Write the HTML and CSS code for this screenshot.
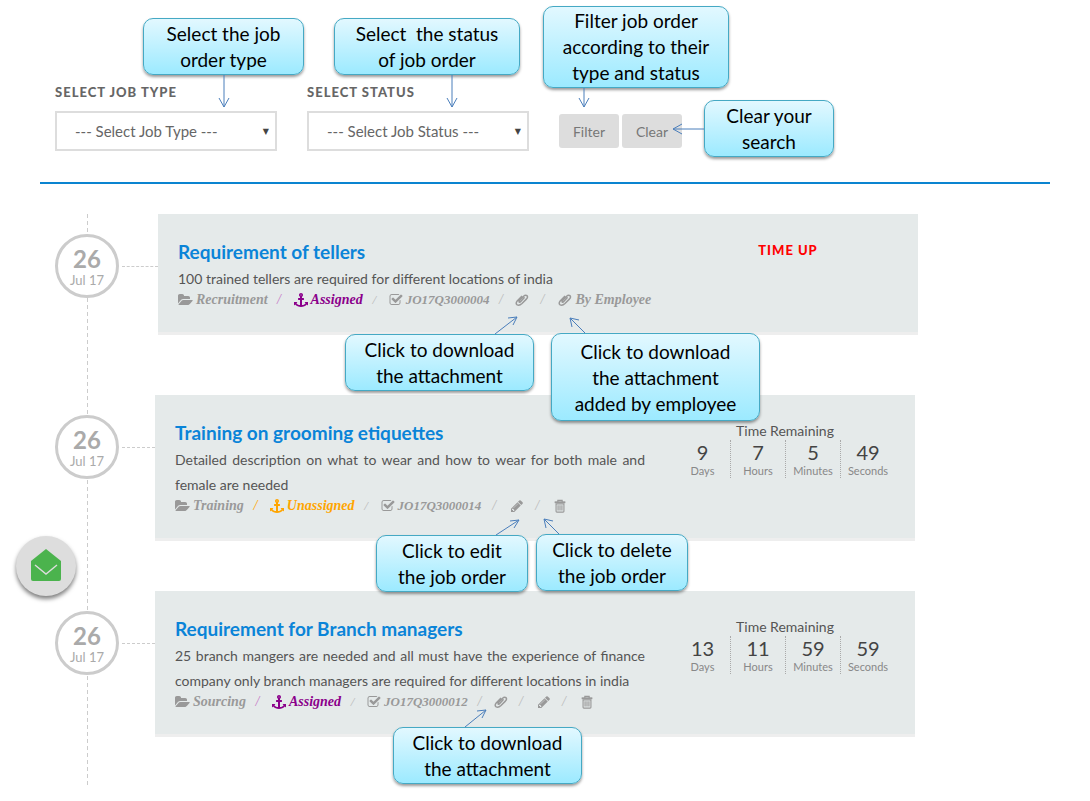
FILE: index.html
```html
<!DOCTYPE html>
<html lang="en">
<head>
<meta charset="utf-8">
<meta name="viewport" content="width=device-width, initial-scale=1">
<title>Job orders</title>
<link rel="stylesheet" href="styles.css">
</head>
<body>
<svg class="sprite" aria-hidden="true">
  <symbol id="folder" viewBox="0 0 1920 1792"><path d="M1879 952q0 31-31 66l-336 396q-43 51-120.5 86.5t-143.5 35.5h-1088q-34 0-60.5-13t-26.5-43q0-31 31-66l336-396q43-51 120.5-86.5t143.5-35.5h1088q34 0 60.5 13t26.5 43zm-343-344v160h-832q-94 0-197 47.5t-164 119.5l-337 396-5 6q0-4-.5-12.5t-.5-12.5v-960q0-92 66-158t158-66h320q92 0 158 66t66 158v32h544q92 0 158 66t66 158z"/></symbol>
  <symbol id="anchor" viewBox="0 0 1792 1792"><path d="M960 256q0-26-19-45t-45-19-45 19-19 45 19 45 45 19 45-19 19-45zm832 928v352q0 22-20 30-8 2-12 2-12 0-23-9l-93-93q-119 143-318.500 226.500t-429.500 83.500-429.500-83.500-318.500-226.500l-93 93q-9 9-23 9-4 0-12-2-20-8-20-30v-352q0-14 9-23t23-9h352q22 0 30 20 8 19-7 35l-100 100q67 91 189.500 153.500t271.500 82.500v-647h-192q-26 0-45-19t-19-45v-128q0-26 19-45t45-19h192v-163q-58-34-93-92.500t-35-128.500q0-106 75-181t181-75 181 75 75 181q0 70-35 128.500t-93 92.500v163h192q26 0 45 19t19 45v128q0 26-19 45t-45 19h-192v647q149-20 271.500-82.500t189.500-153.500l-100-100q-15-16-7-35 8-20 30-20h352q14 0 23 9t9 23z"/></symbol>
  <symbol id="check" viewBox="0 0 1792 1792"><path d="M1472 930v318q0 119-84.500 203.500t-203.500 84.500h-832q-119 0-203.500-84.500t-84.500-203.500v-832q0-119 84.500-203.500t203.500-84.500h832q63 0 117 25 15 7 18 23 3 17-9 29l-49 49q-10 10-23 10-3 0-9-2-23-6-45-6h-832q-66 0-113 47t-47 113v832q0 66 47 113t113 47h832q66 0 113-47t47-113v-254q0-13 9-22l64-64q10-10 23-10 6 0 12 3 20 8 20 29zm231-489l-814 814q-24 24-57 24t-57-24l-430-430q-24-24-24-57t24-57l110-110q24-24 57-24t57 24l263 263 647-647q24-24 57-24t57 24l110 110q24 24 24 57t-24 57z"/></symbol>
  <symbol id="pencil" viewBox="0 0 1792 1792"><path d="M491 1536l91-91-235-235-91 91v107h128v128h107zm523-928q0-22-22-22-10 0-17 7l-542 542q-7 7-7 17 0 22 22 22 10 0 17-7l542-542q7-7 7-17zm-54-192l416 416-832 832h-416v-416zm683 96q0 53-37 90l-166 166-416-416 166-165q36-38 90-38 53 0 91 38l235 234q37 39 37 91z"/></symbol>
  <symbol id="clip" viewBox="0 0 16 14"><path d="M10.500 4.500 6.600 8.600Q5 10.200 4.600 9Q4.400 8.200 5.500 7L9.500 3Q12 .8 13.600 2Q15.300 3.400 13 6L8 11Q5 13.700 2.500 12.500Q.2 10.900 2.500 8.100L7.500 2.900" fill="none" stroke="currentColor" stroke-width="1.700" stroke-linecap="round"/></symbol>
  <symbol id="trash" viewBox="0 0 14 16"><path d="M4.500 3V1.500h5V3M1 3.500h12M2.500 5.500h9V14q0 1-1 1h-7q-1 0-1-1zM4.800 7v6M7 7v6M9.200 7v6" fill="none" stroke="currentColor" stroke-width="1.300"/><path d="M1 3h12v1.800h-12z"/></symbol>
</svg>

<main class="page">
  <form class="filters">
    <div class="field">
      <label class="field-label" for="job-type">Select job type</label>
      <div class="select-box">
        <select id="job-type"><option>--- Select Job Type ---</option></select>
        <span class="caret" aria-hidden="true">▼</span>
      </div>
      <div class="callout callout-type">Select the job<br>order type
        <svg class="arrow" aria-hidden="true"><path d="M80 56v32M75 79l5 9 5-9"/></svg>
      </div>
    </div>
    <div class="field">
      <label class="field-label" for="job-status">Select status</label>
      <div class="select-box">
        <select id="job-status"><option>--- Select Job Status ---</option></select>
        <span class="caret" aria-hidden="true">▼</span>
      </div>
      <div class="callout callout-status">Select&nbsp; the status<br>of job order
        <svg class="arrow" aria-hidden="true"><path d="M117 56v32M112 79l5 9 5-9"/></svg>
      </div>
    </div>
    <div class="actions">
      <button class="btn" type="submit">Filter</button>
      <button class="btn" type="reset">Clear</button>
      <div class="callout callout-filter">Filter job order<br>according to their<br>type and status
        <svg class="arrow" aria-hidden="true"><path d="M40 81v19M35 91l5 9 5-9"/></svg>
      </div>
      <div class="callout callout-clear">Clear your<br>search
        <svg class="arrow" aria-hidden="true"><path d="M-1 28h-31M-23 23l-9 5 9 5"/></svg>
      </div>
    </div>
  </form>

  <section class="timeline">
    <article class="entry entry-closed">
      <div class="rail"><time class="date" datetime="2017-07-26"><b>26</b><span>Jul 17</span></time></div>
      <div class="card">
        <div class="info">
          <h2 class="title">Requirement of tellers</h2>
          <p class="desc">100 trained tellers are required for different locations of india</p>
          <ul class="meta">
            <li><svg class="icon wide"><use href="#folder"/></svg>Recruitment</li>
            <li class="assigned"><svg class="icon"><use href="#anchor"/></svg>Assigned</li>
            <li class="code"><svg class="icon"><use href="#check"/></svg>JO17Q3000004</li>
            <li><a href="#" aria-label="Attachment"><svg class="icon"><use href="#clip"/></svg></a></li>
            <li class="action"><a href="#"><svg class="icon"><use href="#clip"/></svg>By Employee</a></li>
          </ul>
        </div>
        <div class="remaining"><strong class="time-up">Time up</strong></div>
        <div class="callout callout-attach">Click to download<br>the attachment
          <svg class="arrow" aria-hidden="true"><path d="M149-1l22-17M162-17l9-1-4 8"/></svg>
        </div>
        <div class="callout callout-employee">Click to download<br>the attachment<br>added by employee
          <svg class="arrow" aria-hidden="true"><path d="M33-1L18-16M20-7l-2-9 9 2"/></svg>
        </div>
      </div>
    </article>

    <article class="entry">
      <div class="rail"><time class="date" datetime="2017-07-26"><b>26</b><span>Jul 17</span></time></div>
      <div class="card">
        <div class="info">
          <h2 class="title">Training on grooming etiquettes</h2>
          <p class="desc">Detailed description on what to wear and how to wear for both male and female are needed</p>
          <ul class="meta">
            <li><svg class="icon wide"><use href="#folder"/></svg>Training</li>
            <li class="unassigned"><svg class="icon"><use href="#anchor"/></svg>Unassigned</li>
            <li class="code"><svg class="icon"><use href="#check"/></svg>JO17Q3000014</li>
            <li class="action"><a href="#" aria-label="Edit"><svg class="icon"><use href="#pencil"/></svg></a></li>
            <li class="action"><a href="#" aria-label="Delete"><svg class="icon"><use href="#trash"/></svg></a></li>
          </ul>
        </div>
        <div class="remaining">
          <p class="remaining-label">Time Remaining</p>
          <ul class="clock">
            <li><b>9</b><span>Days</span></li>
            <li><b>7</b><span>Hours</span></li>
            <li><b>5</b><span>Minutes</span></li>
            <li><b>49</b><span>Seconds</span></li>
          </ul>
        </div>
        <div class="callout callout-edit">Click to edit<br>the job order
          <svg class="arrow" aria-hidden="true"><path d="M119-1l23-15M133-15l9-1-5 8"/></svg>
        </div>
        <div class="callout callout-delete">Click to delete<br>the job order
          <svg class="arrow" aria-hidden="true"><path d="M22-1L7-16M9-7l-2-9 9 2"/></svg>
        </div>
      </div>
    </article>

    <article class="entry">
      <div class="rail"><time class="date" datetime="2017-07-26"><b>26</b><span>Jul 17</span></time></div>
      <div class="card">
        <div class="info">
          <h2 class="title">Requirement for Branch managers</h2>
          <p class="desc">25 branch mangers are needed and all must have the experience of finance company only branch managers are required for different locations in india</p>
          <ul class="meta">
            <li><svg class="icon wide"><use href="#folder"/></svg>Sourcing</li>
            <li class="assigned"><svg class="icon"><use href="#anchor"/></svg>Assigned</li>
            <li class="code"><svg class="icon"><use href="#check"/></svg>JO17Q3000012</li>
            <li><a href="#" aria-label="Attachment"><svg class="icon"><use href="#clip"/></svg></a></li>
            <li class="action"><a href="#" aria-label="Edit"><svg class="icon"><use href="#pencil"/></svg></a></li>
            <li class="action"><a href="#" aria-label="Delete"><svg class="icon"><use href="#trash"/></svg></a></li>
          </ul>
        </div>
        <div class="remaining">
          <p class="remaining-label">Time Remaining</p>
          <ul class="clock">
            <li><b>13</b><span>Days</span></li>
            <li><b>11</b><span>Hours</span></li>
            <li><b>59</b><span>Minutes</span></li>
            <li><b>59</b><span>Seconds</span></li>
          </ul>
        </div>
        <div class="callout callout-attach-last">Click to download<br>the attachment
          <svg class="arrow" aria-hidden="true"><path d="M71-1l21-17M83-17l9-1-4 8"/></svg>
        </div>
      </div>
    </article>
  </section>
</main>

<button class="mail" type="button" aria-label="Messages">
  <svg viewBox="0 0 32 34" aria-hidden="true"><path d="M16 1 31 13v18q0 2-2 2H3q-2 0-2-2V13z" fill="#4bb34d"/><path d="m5 17 11 9 11-9" fill="none" stroke="#ddd" stroke-width="1.400"/></svg>
</button>
</body>
</html>
```
FILE: styles.css
```css
* { box-sizing: border-box; }

body {
  margin: 0;
  background: #fff;
  color: #555;
  font: 14px/25px Lato, "Open Sans", sans-serif;
}

h2, p, ul { margin: 0; padding: 0; }
ul { list-style: none; }
a { color: inherit; text-decoration: none; }

.sprite { position: absolute; width: 0; height: 0; }

.page { padding: 0 40px 16px; }

/* Filter bar */
.filters {
  display: flex;
  align-items: flex-end;
  gap: 30px;
  padding: 82px 15px 31px;
  border-bottom: 2px solid #0a84d0;
}

.field {
  position: relative;
  flex: 0 1 222px;
  display: flex;
  flex-direction: column;
  gap: 9px;
}

.field-label {
  color: #666;
  font-size: 13px;
  font-weight: 900;
  line-height: 20px;
  letter-spacing: 1px;
  text-transform: uppercase;
}

.select-box { display: grid; align-items: center; }
.select-box > * { grid-area: 1 / 1; }

.select-box select {
  appearance: none;
  width: 100%;
  height: 40px;
  padding: 0 18px;
  border: 2px solid #ddd;
  border-radius: 0;
  background: #fff;
  color: #666;
  font: 15px Lato, sans-serif;
}

.caret {
  justify-self: end;
  padding-right: 8px;
  color: #444;
  font: 8px "DejaVu Sans", sans-serif;
  pointer-events: none;
}

.actions {
  position: relative;
  display: flex;
  gap: 3px;
  padding-bottom: 3px;
}

.btn {
  min-width: 60px;
  height: 34px;
  padding: 0 12px;
  border: 0;
  border-radius: 3px;
  background: #ddd;
  color: #777;
  font: 14px Lato, sans-serif;
}

/* Timeline */
.timeline {
  margin-top: 30px;
  padding: 0 15px 48px;
  background: repeating-linear-gradient(to bottom, #ccc 0 4px, transparent 4px 7px) 47px 0 / 1px 100% no-repeat;
}

.entry {
  display: grid;
  grid-template-columns: 100px minmax(0, 760px);
  margin-bottom: 50px;
}
.entry:last-child { margin-bottom: 0; }
.entry-closed { grid-template-columns: 103px minmax(0, 760px); margin-bottom: 60px; }

.rail {
  display: flex;
  align-items: center;
  align-self: start;
  gap: 3px;
  padding-top: 20px;
}
.rail::after { content: ""; flex: 1; border-top: 1px dashed #ccc; }

.date {
  display: flex;
  flex-direction: column;
  justify-content: center;
  align-items: center;
  width: 64px;
  height: 64px;
  padding-top: 4px;
  border: 3px solid #ccc;
  border-radius: 50%;
  background: #fff;
  color: #aaa;
}
.date b { font-size: 24px; line-height: 24px; }
.date span { font-size: 13px; line-height: 18px; }

.card {
  position: relative;
  display: grid;
  grid-template-columns: minmax(0, 470fr) minmax(0, 220fr);
  gap: 30px;
  padding: 24px 20px 23px;
  border-bottom: 3px solid #eee;
  background: #e5eaea padding-box;
}

.title {
  color: #0a84d8;
  font-size: 19px;
  font-weight: 700;
  line-height: 28px;
}

.desc { text-align: justify; }

.meta {
  display: flex;
  white-space: nowrap;
  color: #999;
  font: italic bold 14px/18px "Liberation Serif", serif;
}
.meta li, .meta a { display: flex; align-items: center; gap: 3px; }
.meta li + li::before {
  content: "/";
  width: 23px;
  color: #bbb;
  font-weight: normal;
  text-align: center;
}
.meta li.action::before { width: 26px; }
.meta .code { font-size: 13px; }
.meta li.assigned::before { color: #c77bc7; }
.meta li.unassigned::before { color: #ffa500; }
.meta .assigned { color: #8b008b; }
.meta .unassigned { color: #ffa500; }

.icon { width: 14px; height: 14px; fill: currentColor; }
.icon.wide { width: 15px; }

.remaining { padding-top: 3px; text-align: center; }
.remaining-label { line-height: 18px; }

.time-up {
  display: block;
  color: #f00;
  font-size: 13px;
  font-weight: 900;
  line-height: 18px;
  letter-spacing: 1px;
  text-transform: uppercase;
}

.clock { display: grid; grid-template-columns: repeat(4, 1fr); }
.clock li { display: flex; flex-direction: column; }
.clock li + li { border-left: 1px dotted #aaa; }
.clock b { color: #444; font-size: 20px; font-weight: 400; line-height: 24px; }
.clock span { color: #888; font-size: 11px; line-height: 14px; }

/* Help callouts, laid over the parts they explain */
.callout {
  position: absolute;
  z-index: 2;
  padding: 2px 0 1px;
  border: 1px solid #45a9c4;
  border-radius: 10px;
  background: linear-gradient(#e2f8ff, #9ceaff);
  box-shadow: 0 2px 3px rgba(0, 0, 0, .4);
  color: #000;
  font-size: 19px;
  line-height: 26px;
  text-align: center;
  white-space: nowrap;
}
.arrow {
  position: absolute;
  left: 0;
  top: 0;
  width: 1px;
  height: 1px;
  overflow: visible;
  fill: none;
  stroke: #4a7ebb;
  stroke-width: 1;
}

.callout-type { left: 88px; top: -64px; width: 161px; }
.callout-status { left: 27px; top: -64px; width: 186px; }
.callout-filter { left: -16px; top: -108px; width: 186px; padding: 1px 0; }
.callout-clear { left: 145px; top: -14px; width: 130px; }
.callout-attach { left: 187px; top: 120px; width: 189px; }
.callout-employee { left: 393px; top: 119px; width: 209px; padding: 5px 0 3px; }
.callout-edit { left: 221px; top: 140px; width: 152px; }
.callout-delete { left: 381px; top: 139px; width: 152px; }
.callout-attach-last { left: 238px; top: 136px; width: 189px; }

/* Floating message button */
.mail {
  position: absolute;
  left: 16px;
  top: 536px;
  display: grid;
  place-items: center;
  width: 60px;
  height: 60px;
  padding: 0 0 3px;
  border: 0;
  border-radius: 50%;
  background: #ddd;
  box-shadow: 0 3px 4px rgba(0, 0, 0, .5);
}
.mail svg { width: 32px; height: 34px; }
```
